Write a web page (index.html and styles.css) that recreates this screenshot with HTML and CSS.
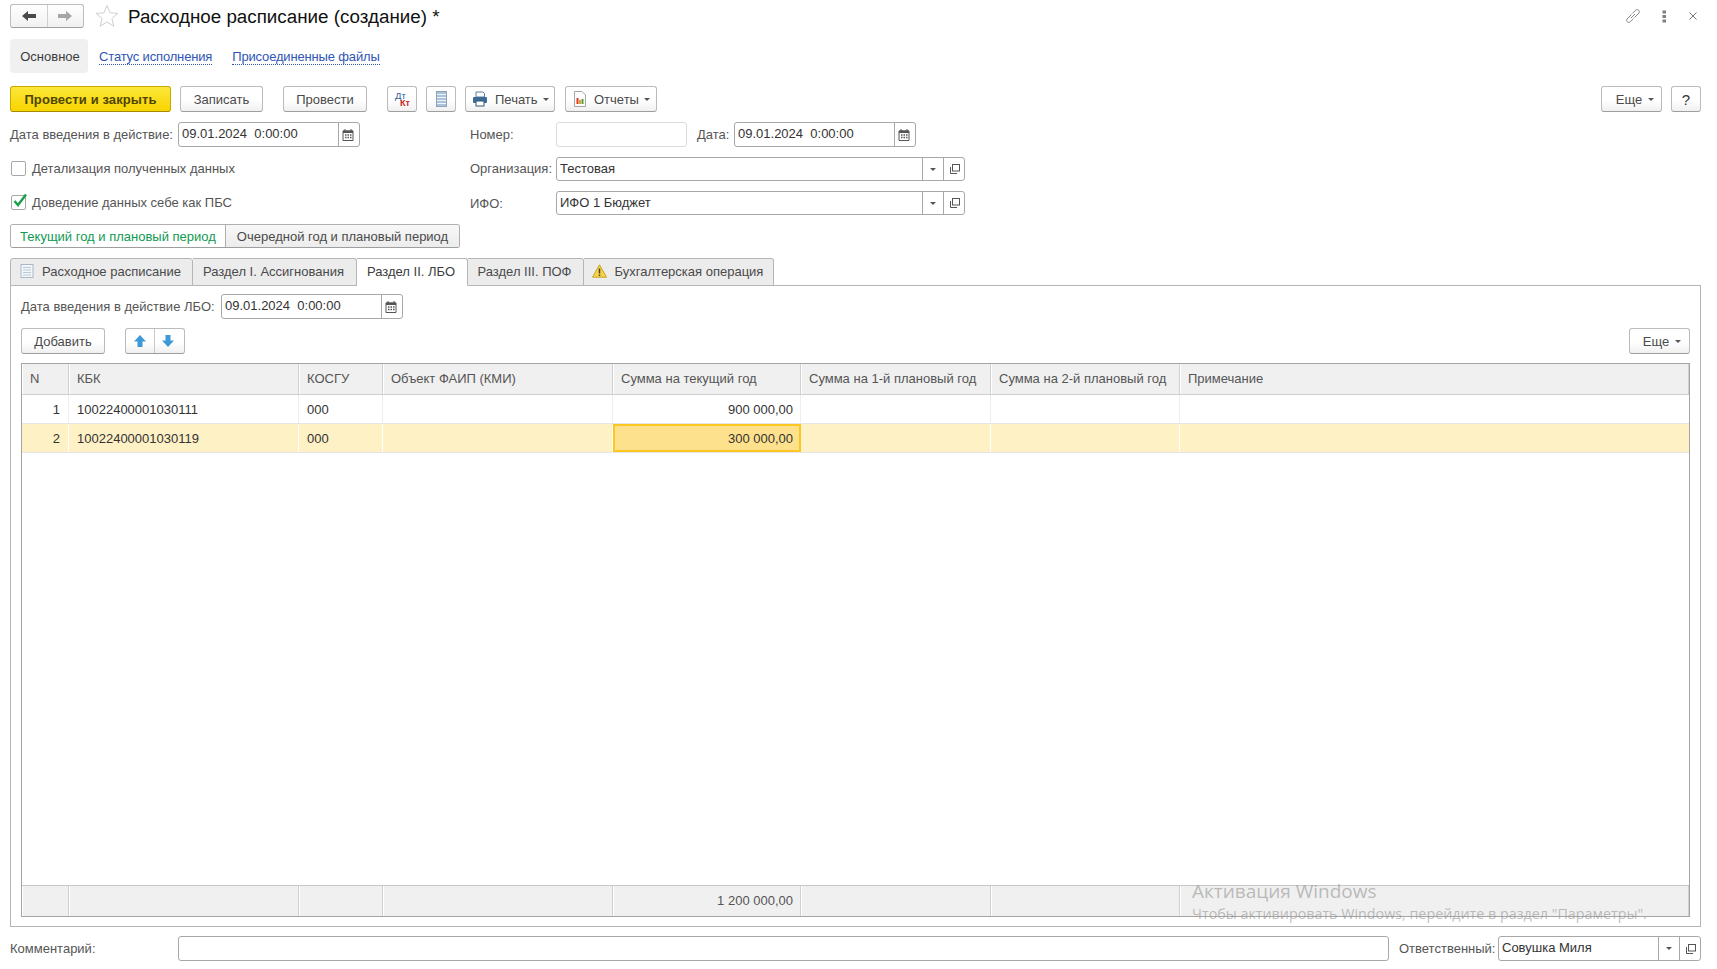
FILE: index.html
```html
<!DOCTYPE html>
<html lang="ru">
<head>
<meta charset="utf-8">
<title>Расходное расписание (создание) *</title>
<link rel="stylesheet" href="styles.css">
</head>
<body>
<div class="page">
  <header class="titlebar">
    <div class="navgroup">
      <span class="navbtn"><svg width="16" height="12" viewBox="0 0 16 12"><path d="M1 6l6-5v3h8v4H7v3z" fill="#4a4a4a"/></svg></span>
      <span class="navbtn"><svg width="16" height="12" viewBox="0 0 16 12"><path d="M15 6L9 1v3H1v4h8v3z" fill="#a6a6a6"/></svg></span>
    </div>
    <svg class="star" width="24" height="24" viewBox="0 0 24 24"><path d="M12 1.500l3 7.300 7.900.6-6 5.100 1.900 7.700L12 18l-6.800 4.200 1.900-7.700-6-5.100 7.900-.6z" fill="#fff" stroke="#cfcfcf"/></svg>
    <h1 class="title">Расходное расписание (создание) *</h1>
    <div class="winicons">
      <svg class="wi-link" width="16" height="16" viewBox="0 0 16 16" fill="none" stroke="#8a8a8a" stroke-width="1"><path d="M6.500 6.500L2 11a2.200 2.200 0 0 0 .3 2.800 2.200 2.200 0 0 0 2.900.1l3.300-3.300"/><path d="M9.500 9.500L14 5a2.200 2.200 0 0 0-.3-2.800 2.200 2.200 0 0 0-2.900-.1L7.500 5.400"/><path d="M6 10l4-4"/></svg>
      <svg class="wi-dots" width="5" height="13" viewBox="0 0 5 13" fill="#7f7f7f"><rect x=".5" y=".5" width="3.500" height="3"/><rect x=".5" y="5" width="3.500" height="3"/><rect x=".5" y="9.500" width="3.500" height="3"/></svg>
      <svg class="wi-close" width="8" height="8" viewBox="0 0 8 8" stroke="#777" stroke-width="1"><path d="M.5.5l7 7M7.500.5l-7 7"/></svg>
    </div>
  </header>

  <nav class="pagetabs">
    <span class="pagetab-current">Основное</span>
    <a class="pagelink link-status">Статус исполнения</a>
    <a class="pagelink">Присоединенные файлы</a>
  </nav>

  <div class="toolbar">
    <button class="btn btn-primary">Провести и закрыть</button>
    <button class="btn btn-write">Записать</button>
    <button class="btn btn-post">Провести</button>
    <button class="btn btn-icon btn-dtkt"><span class="dt">Дт</span><span class="kt">Кт</span></button>
    <button class="btn btn-icon">
      <svg width="11" height="16" viewBox="0 0 11 16"><rect x=".5" y=".5" width="10" height="15" fill="#a9c4da" stroke="#8fa3b3"/><path d="M1 3.500h9M1 6.500h9M1 9.500h9M1 12.500h9" stroke="#eef4f8"/></svg>
    </button>
    <button class="btn btn-print">
      <svg width="16" height="16" viewBox="0 0 16 16"><path d="M4 1h7l1.500 1.500V6H4z" fill="#fff" stroke="#5b7f9e"/><rect x="1" y="6" width="14" height="6" rx="1" fill="#3c6c96"/><rect x="4" y="10" width="8" height="5" fill="#fff" stroke="#2f5a80"/></svg>
      <span>Печать</span><i class="caret"></i>
    </button>
    <button class="btn btn-reports">
      <svg width="12" height="16" viewBox="0 0 12 16"><path d="M.5.5h7.500l3.500 3.500v11.500H.5z" fill="#fdfdfd" stroke="#a5a5a5"/><rect x="2.500" y="7" width="2" height="6" fill="#d93a2b"/><rect x="5" y="9" width="2" height="4" fill="#e8a21c"/><rect x="7.500" y="8" width="2" height="5" fill="#4aa53c"/></svg>
      <span>Отчеты</span><i class="caret"></i>
    </button>
    <span class="spacer"></span>
    <button class="btn btn-more btn-more-top">Еще<i class="caret"></i></button>
    <button class="btn btn-help">?</button>
  </div>

  <section class="form">
    <div class="formcol formcol-left">
      <div class="field field-h25">
        <label class="lbl lbl-date">Дата введения в действие:</label>
        <div class="input input-date"><span class="val">09.01.2024&nbsp; 0:00:00</span>
          <span class="inbtn inbtn-cal"><svg class="cal" width="12" height="12" viewBox="0 0 12 12"><use href="#i-cal"/></svg></span></div>
      </div>
      <label class="check check-1"><span class="box"></span>Детализация полученных данных</label>
      <label class="check check-2"><span class="box"><svg class="tick" width="16" height="16" viewBox="0 0 16 16"><path d="M2.500 8l3.500 4L14 1.500" fill="none" stroke="#1aa04a" stroke-width="2.400"/></svg></span>Доведение данных себе как ПБС</label>
    </div>
    <div class="formcol formcol-right">
      <div class="field field-h25">
        <label class="lbl lbl-right">Номер:</label>
        <div class="input input-num"></div>
        <label class="lbl lbl-dat">Дата:</label>
        <div class="input input-date"><span class="val">09.01.2024&nbsp; 0:00:00</span>
          <span class="inbtn inbtn-cal"><svg class="cal" width="12" height="12" viewBox="0 0 12 12"><use href="#i-cal"/></svg></span></div>
      </div>
      <div class="field field-h24">
        <label class="lbl lbl-right lbl-up">Организация:</label>
        <div class="input input-ref"><span class="val val-grow">Тестовая</span>
          <span class="inbtn inbtn-drop"><i class="caret"></i></span>
          <span class="inbtn inbtn-open"><svg width="10" height="10" viewBox="0 0 10 10"><use href="#i-open"/></svg></span></div>
      </div>
      <div class="field field-h24">
        <label class="lbl lbl-right">ИФО:</label>
        <div class="input input-ref"><span class="val val-grow">ИФО 1 Бюджет</span>
          <span class="inbtn inbtn-drop"><i class="caret"></i></span>
          <span class="inbtn inbtn-open"><svg width="10" height="10" viewBox="0 0 10 10"><use href="#i-open"/></svg></span></div>
      </div>
    </div>
  </section>

  <div class="toggle">
    <span class="toggle-item toggle-on">Текущий год и плановый период</span>
    <span class="toggle-item toggle-off">Очередной год и плановый период</span>
  </div>

  <div class="tabs">
    <span class="tab tab-1"><svg width="14" height="14" viewBox="0 0 14 14"><rect x="1" y=".5" width="12" height="13" fill="#f4f7fa" stroke="#a9b8c6"/><path d="M3 3.500h8M3 6h8M3 8.500h8M3 11h8" stroke="#b9c8d6"/></svg>Расходное расписание</span>
    <span class="tab tab-2">Раздел I. Ассигнования</span>
    <span class="tab tab-3 tab-active">Раздел II. ЛБО</span>
    <span class="tab tab-4">Раздел III. ПОФ</span>
    <span class="tab tab-5"><svg width="15" height="14" viewBox="0 0 15 14"><path d="M7.500 .8L14.500 13.200H.5z" fill="#f6d44a" stroke="#c9a227" stroke-linejoin="round"/><path d="M7.500 4.500v5M7.500 10.500v1.500" stroke="#4a4020" stroke-width="1.500"/></svg>Бухгалтерская операция</span>
  </div>

  <main class="panel">
    <div class="field field-h25 field-lbo">
      <label class="lbl">Дата введения в действие ЛБО:</label>
      <div class="input input-date"><span class="val">09.01.2024&nbsp; 0:00:00</span>
        <span class="inbtn inbtn-cal"><svg class="cal" width="12" height="12" viewBox="0 0 12 12"><use href="#i-cal"/></svg></span></div>
    </div>
    <div class="toolbar toolbar-inner">
      <button class="btn btn-add">Добавить</button>
      <div class="arrows">
        <span class="arrow"><svg width="14" height="14" viewBox="0 0 14 14"><path d="M7 1l6 6.500H9.500V13h-5V7.500H1z" fill="#3d9ad6"/></svg></span>
        <span class="arrow"><svg width="14" height="14" viewBox="0 0 14 14"><path d="M7 13l6-6.500H9.500V1h-5v5.500H1z" fill="#3d9ad6"/></svg></span>
      </div>
      <span class="spacer"></span>
      <button class="btn btn-more">Еще<i class="caret"></i></button>
    </div>

    <div class="grid">
      <div class="row row-head">
        <div class="cell">N</div><div class="cell">КБК</div><div class="cell">КОСГУ</div><div class="cell">Объект ФАИП (КМИ)</div><div class="cell">Сумма на текущий год</div><div class="cell">Сумма на 1-й плановый год</div><div class="cell">Сумма на 2-й плановый год</div><div class="cell">Примечание</div>
      </div>
      <div class="row row-data">
        <div class="cell num">1</div><div class="cell">10022400001030111</div><div class="cell">000</div><div class="cell"></div><div class="cell num">900 000,00</div><div class="cell"></div><div class="cell"></div><div class="cell"></div>
      </div>
      <div class="row row-data row-sel">
        <div class="cell num">2</div><div class="cell">10022400001030119</div><div class="cell">000</div><div class="cell"></div><div class="cell num cell-sel">300 000,00</div><div class="cell"></div><div class="cell"></div><div class="cell"></div>
      </div>
      <div class="grid-empty"></div>
      <div class="row row-foot">
        <div class="cell"></div><div class="cell"></div><div class="cell"></div><div class="cell"></div><div class="cell num">1 200 000,00</div><div class="cell"></div><div class="cell"></div><div class="cell"></div>
      </div>
    </div>
  </main>

  <footer class="bottom">
    <label class="lbl lbl-date">Комментарий:</label>
    <div class="input input-comment"></div>
    <label class="lbl lbl-resp">Ответственный:</label>
    <div class="input input-resp"><span class="val val-grow">Совушка Миля</span>
      <span class="inbtn inbtn-drop"><i class="caret"></i></span>
      <span class="inbtn inbtn-open"><svg width="10" height="10" viewBox="0 0 10 10"><use href="#i-open"/></svg></span></div>
  </footer>

  <div class="watermark">
    <div class="wm-1">Активация Windows</div>
    <div class="wm-2">Чтобы активировать Windows, перейдите в раздел "Параметры".</div>
  </div>
</div>

<svg class="defs" width="0" height="0">
  <symbol id="i-cal" viewBox="0 0 12 12"><path d="M1 2h10v9.500H1z" fill="#fff" stroke="#555"/><rect x="1" y="1.500" width="10" height="2.500" fill="#555"/><path d="M3 0v2M9 0v2" stroke="#555"/><path d="M3 6h1.500M5.500 6H7M8 6h1.500M3 8.500h1.500M5.500 8.500H7M8 8.500h1.500" stroke="#555" stroke-width="1.300"/></symbol>
  <symbol id="i-open" viewBox="0 0 10 10"><path d="M.5 3v6.500h6.500" fill="none" stroke="#555"/><rect x="2.500" y=".5" width="7" height="6.500" fill="#fff" stroke="#555"/></symbol>
</svg>
</body>
</html>
```

FILE: styles.css
```css
* { box-sizing: border-box; }
html, body { margin: 0; padding: 0; }
body {
  width: 1717px;
  height: 969px;
  overflow: hidden;
  background: #fff;
  font-family: "Liberation Sans", Arial, sans-serif;
  font-size: 13px;
  color: #4a4a4a;
}
.defs { position: absolute; }
.page {
  position: relative;
  height: 969px;
  display: flex;
  flex-direction: column;
  padding: 4px 16px 8px 10px;
}
.titlebar { display: flex; align-items: center; height: 24px; }
.navgroup {
  display: flex;
  width: 74px;
  height: 24px;
  border: 1px solid #bdbdbd;
  border-bottom-color: #a0a0a0;
  border-radius: 3px;
  background: linear-gradient(#fff, #f1f1f1);
}
.navbtn { flex: 1; display: flex; align-items: center; justify-content: center; }
.navbtn + .navbtn { border-left: 1px solid #d0d0d0; }
.star { margin-left: 11px; }
.title {
  margin: 2px 0 0 9px;
  font-size: 18.8px;
  font-weight: 400;
  color: #111;
}
.winicons {
  margin-left: auto;
  margin-right: 4px;
  display: flex;
  align-items: center;
}
.wi-dots { margin-left: 21px; }
.wi-close { margin-left: 22px; }
.pagetabs { display: flex; align-items: center; height: 34px; margin-top: 11px; }
.pagetab-current {
  width: 78px;
  height: 34px;
  padding-left: 2px;
  line-height: 36px;
  text-align: center;
  background: #f0f0f0;
  border-radius: 4px;
  color: #3c3c3c;
}
.pagelink {
  margin: 2px 0 0 20px;
  color: #2f55b5;
  border-bottom: 1px dotted #2f55b5;
  line-height: 14px;
  letter-spacing: -0.16px;
}
.link-status { margin-left: 11px; }
.toolbar { display: flex; align-items: center; height: 26px; margin-top: 13px; }
.spacer { flex: 1; }
.btn {
  height: 26px;
  padding: 0;
  margin: 0 9px 0 0;
  display: flex;
  align-items: center;
  justify-content: center;
  font: inherit;
  color: #4a4a4a;
  background: linear-gradient(#fff 55%, #f0f0f0);
  border: 1px solid #bcbcbc;
  border-bottom-color: #9e9e9e;
  border-radius: 3px;
}
.btn-primary {
  width: 161px;
  font-weight: 700;
  letter-spacing: 0.1px;
  color: #4f4500;
  background: linear-gradient(#fce83a, #f8d400);
  border-color: #c9a800;
  border-bottom-color: #a58a00;
}
.btn-write { width: 83px; margin-right: 20px; }
.btn-post { width: 84px; margin-right: 20px; }
.btn-icon { width: 30px; }
.btn-dtkt { position: relative; }
.dt {
  position: absolute;
  left: 7px;
  top: 3px;
  font-size: 9.5px;
  color: #2f5f96;
}
.kt {
  position: absolute;
  left: 12px;
  top: 11px;
  font-size: 9px;
  font-weight: 700;
  color: #c5261b;
}
.btn-print { width: 90px; margin-right: 10px; justify-content: flex-start; padding-left: 6px; gap: 7px; }
.btn-reports { width: 92px; margin-right: 0; justify-content: flex-start; padding-left: 8px; gap: 8px; }
.caret {
  display: inline-block;
  width: 0;
  height: 0;
  border-left: 3px solid transparent;
  border-right: 3px solid transparent;
  border-top: 3px solid #555;
}
.btn .caret { margin-left: 7px; margin-top: 1px; }
.btn .caret { margin-left: 6px; }
.btn-print .caret { margin-left: -2px; }
.btn-reports .caret { margin-left: -3px; }
.btn-more { width: 61px; margin-right: 0; padding-left: 5px; color: #4a4a4a; }
.btn-more-top { margin-right: 9px; padding-left: 7px; }
.btn-help { width: 30px; margin-right: 0; font-size: 15px; color: #333; }

.form { display: flex; margin-top: 10px; }
.formcol { display: flex; flex-direction: column; }
.formcol-left { width: 460px; }
.formcol-right { gap: 10px; }
.field { display: flex; align-items: center; }
.field-h25 { height: 25px; }
.field-h24 { height: 24px; }
.lbl { white-space: nowrap; color: #555; }
.lbl-date { width: 168px; }
.lbl-right { width: 86px; }
.lbl-up { padding-bottom: 2px; }
.lbl-dat { width: 37px; margin-left: 10px; }
.input {
  display: flex;
  align-items: stretch;
  height: 100%;
  background: #fff;
  border: 1px solid #a8a8a8;
  border-radius: 3px;
  color: #333;
}
.val { padding-left: 3px; line-height: 22px; white-space: nowrap; }
.val-grow { flex: 1; }
.input-date { width: 182px; justify-content: space-between; }
.input-num { width: 131px; border-color: #dcdcdc; }
.input-ref { width: 409px; }
.inbtn {
  display: flex;
  align-items: center;
  justify-content: center;
  border-left: 1px solid #a8a8a8;
}
.inbtn-cal { width: 21px; }
.inbtn-cal .cal { margin-right: 2px; }
.inbtn-drop { width: 21px; }
.inbtn-open { width: 21px; padding-left: 2px; }
.inbtn .caret { border-top-color: #555; }
.check { display: flex; align-items: center; height: 16px; color: #555; }
.check-1 { margin-top: 13px; }
.check-2 { margin-top: 18px; }
.box {
  position: relative;
  width: 15px;
  height: 15px;
  margin: 0 6px 0 1px;
  border: 1px solid #a8a8a8;
  border-radius: 2px;
  background: #fff;
}
.tick { position: absolute; left: 0; top: -3px; }

.toggle {
  display: flex;
  width: 450px;
  height: 24px;
  margin-top: 9px;
  border: 1px solid #b0b0b0;
  border-bottom-color: #9e9e9e;
  border-radius: 3px;
  overflow: hidden;
}
.toggle-item { display: flex; align-items: center; justify-content: center; }
.toggle-on { width: 215px; color: #0f9a52; background: #fff; border-right: 1px solid #b0b0b0; }
.toggle-off { flex: 1; background: linear-gradient(#f7f7f7, #ececec); color: #4a4a4a; }

.tabs { display: flex; height: 28px; margin-top: 10px; margin-bottom: -1px; position: relative; z-index: 1; }
.tab {
  display: flex;
  align-items: center;
  justify-content: center;
  gap: 8px;
  height: 28px;
  padding: 0 2px 2px 0;
  background: #ececec;
  border: 1px solid #b5b5b5;
  border-left: 0;
  border-top-right-radius: 3px;
  color: #4a4a4a;
}
.tab-1 { width: 183px; border-left: 1px solid #b5b5b5; border-top-left-radius: 3px; }
.tab-2 { width: 164px; }
.tab-3 { width: 111px; }
.tab-4 { width: 116px; }
.tab-5 { width: 190px; }
.tab-active { background: #fff; border-bottom-color: #fff; color: #3c3c3c; }

.panel {
  flex: 1;
  min-height: 0;
  display: flex;
  flex-direction: column;
  border: 1px solid #b5b5b5;
  padding: 8px 10px 9px;
}
.field-lbo .lbl { width: 200px; }
.toolbar-inner { margin-top: 9px; }
.btn-add { width: 84px; margin-right: 20px; }
.arrows {
  display: flex;
  width: 60px;
  height: 26px;
  border: 1px solid #bcbcbc;
  border-bottom-color: #9e9e9e;
  border-radius: 3px;
  background: linear-gradient(#fff 55%, #f0f0f0);
}
.arrow { flex: 1; display: flex; align-items: center; justify-content: center; }
.arrow + .arrow { border-left: 1px solid #c8c8c8; padding-right: 2px; }

.grid {
  flex: 1;
  min-height: 0;
  display: flex;
  flex-direction: column;
  margin-top: 9px;
  border: 1px solid #a4a4a4;
}
.grid-empty { flex: 1; }
.row {
  display: grid;
  grid-template-columns: 47px 230px 84px 230px 188px 190px 189px 1fr;
}
.cell {
  display: flex;
  align-items: center;
  padding: 0 8px;
  overflow: hidden;
  white-space: nowrap;
  border-right: 1px solid #eee;
  color: #333;
}
.cell:last-child { border-right: 0; }
.num { justify-content: flex-end; padding-right: 7px; }
.row-data .cell:first-child { padding-right: 8px; }
.row-head { height: 31px; background: #f0f0f0; border-bottom: 1px solid #cfcfcf; }
.row-head .cell { padding-bottom: 2px; border-right: 1px solid #d0d0d0; box-shadow: inset 1px 0 0 #fff; color: #555; }
.row-data { height: 29px; border-bottom: 1px solid #e6e6e6; }
.row-sel { background: #fef1c6; }
.row-sel .cell { border-right-color: #fff; }
.row-sel .cell-sel {
  background: #fee18c;
  border: 2px solid #fcc623;
  color: #333;
  padding-right: 6px;
}
.row-foot { height: 31px; background: #f0f0f0; border-top: 1px solid #c8c8c8; }
.row-foot .cell { padding-bottom: 2px; border-right: 1px solid #d0d0d0; box-shadow: inset 1px 0 0 #fff; color: #555; }

.bottom { display: flex; align-items: center; height: 25px; margin-top: 9px; }
.input-comment { width: 1211px; }
.lbl-resp { margin-left: 10px; width: 99px; }
.input-resp { width: 203px; }
.input-resp .inbtn-drop { width: 21px; }
.input-resp .inbtn-open { width: 21px; }

.watermark {
  position: absolute;
  left: 1192px;
  top: 879px;
  pointer-events: none;
  font-family: "Open Sans", sans-serif;
  color: rgba(150, 150, 150, 0.62);
  white-space: nowrap;
}
.wm-1 { font-size: 19px; line-height: 24px; }
.wm-2 { font-size: 14.3px; line-height: 18px; margin-top: 2px; }
```
